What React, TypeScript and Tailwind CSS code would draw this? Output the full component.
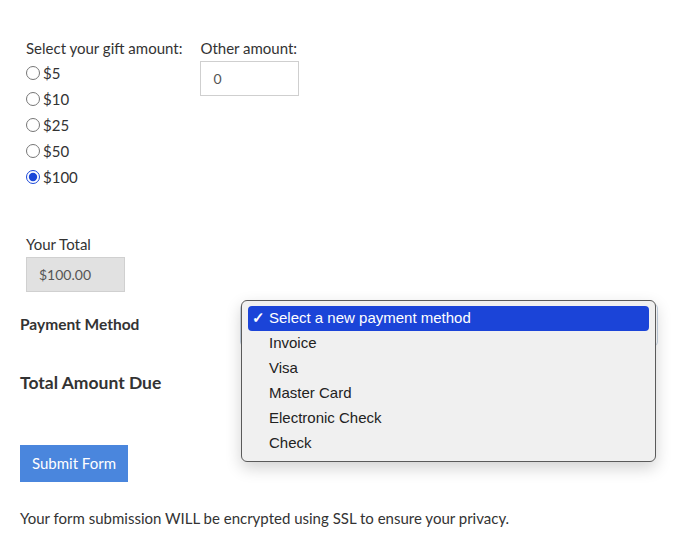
import { useState } from 'react'

const amounts = ['$5', '$10', '$25', '$50', '$100']
const methods = ['Invoice', 'Visa', 'Master Card', 'Electronic Check', 'Check']

export default function App() {
  const [amount, setAmount] = useState('$100')

  return (
    <div className="relative min-h-[555px] w-[687px] bg-white text-[15px] text-[#333] font-['Lato',sans-serif]">
      {/* Gift amount */}
      <div className="flex gap-[18px] px-[26px] pt-[38px]">
        <div>
          <div className="leading-5">Select your gift amount:</div>
          <div className="mt-[2px] flex flex-col">
            {amounts.map((a) => (
              <label key={a} className="flex h-[26px] items-center gap-[3px]">
                <input
                  type="radio"
                  name="amount"
                  checked={amount === a}
                  onChange={() => setAmount(a)}
                  className="m-0 h-[14px] w-[14px] accent-[#1a47d8]"
                />
                <span>{a}</span>
              </label>
            ))}
          </div>
        </div>
        <div>
          <div className="leading-5">Other amount:</div>
          <input
            defaultValue="0"
            className="mt-[3px] h-[35px] w-[99px] border border-[#cfcfcf] px-3 text-[14px] text-[#555] outline-none"
          />
        </div>
      </div>

      {/* Your total */}
      <div className="px-[26px] pt-[44px]">
        <div className="leading-5">Your Total</div>
        <div className="mt-[3px] flex h-[35px] w-[99px] items-center border border-[#d0d0d0] bg-[#e1e1e1] px-3 text-[14px] text-[#555]">
          $100.00
        </div>
      </div>

      {/* Payment method */}
      <div className="flex items-center px-5 pt-[12px]">
        <div className="w-[220px] text-[15.5px] font-bold">Payment Method</div>
        <div className="h-[42px] w-[418px] rounded-[4px] border border-[#c6d3e2] bg-white"></div>
      </div>

      {/* Total due */}
      <div className="px-5 pt-[25px] text-[17.5px] font-bold leading-6">Total Amount Due</div>

      {/* Submit */}
      <div className="px-5 pt-[50px]">
        <button className="h-[37px] w-[108px] bg-[#4a86dd] text-[15px] text-white">Submit Form</button>
      </div>

      <p className="px-5 pt-[25px]">Your form submission WILL be encrypted using SSL to ensure your privacy.</p>

      {/* Open native select popup */}
      <div className="absolute left-[241px] top-[300px] w-[415px] rounded-[6px] border border-[#5a5a5a] bg-[#f0f0f0] px-[6px] py-[5px] font-['Liberation_Sans',Arial,sans-serif] text-[15px] text-[#222] shadow-[0_6px_16px_rgba(0,0,0,0.18)]">
        <div className="flex h-[25px] items-center rounded-[4px] bg-[#1b44d8] pl-[4px] text-white">
          <span className="w-[17px] text-[15px] font-bold">✓</span>
          <span>Select a new payment method</span>
        </div>
        {methods.map((m) => (
          <div key={m} className="flex h-[25px] items-center pl-[21px]">
            {m}
          </div>
        ))}
      </div>
    </div>
  )
}
